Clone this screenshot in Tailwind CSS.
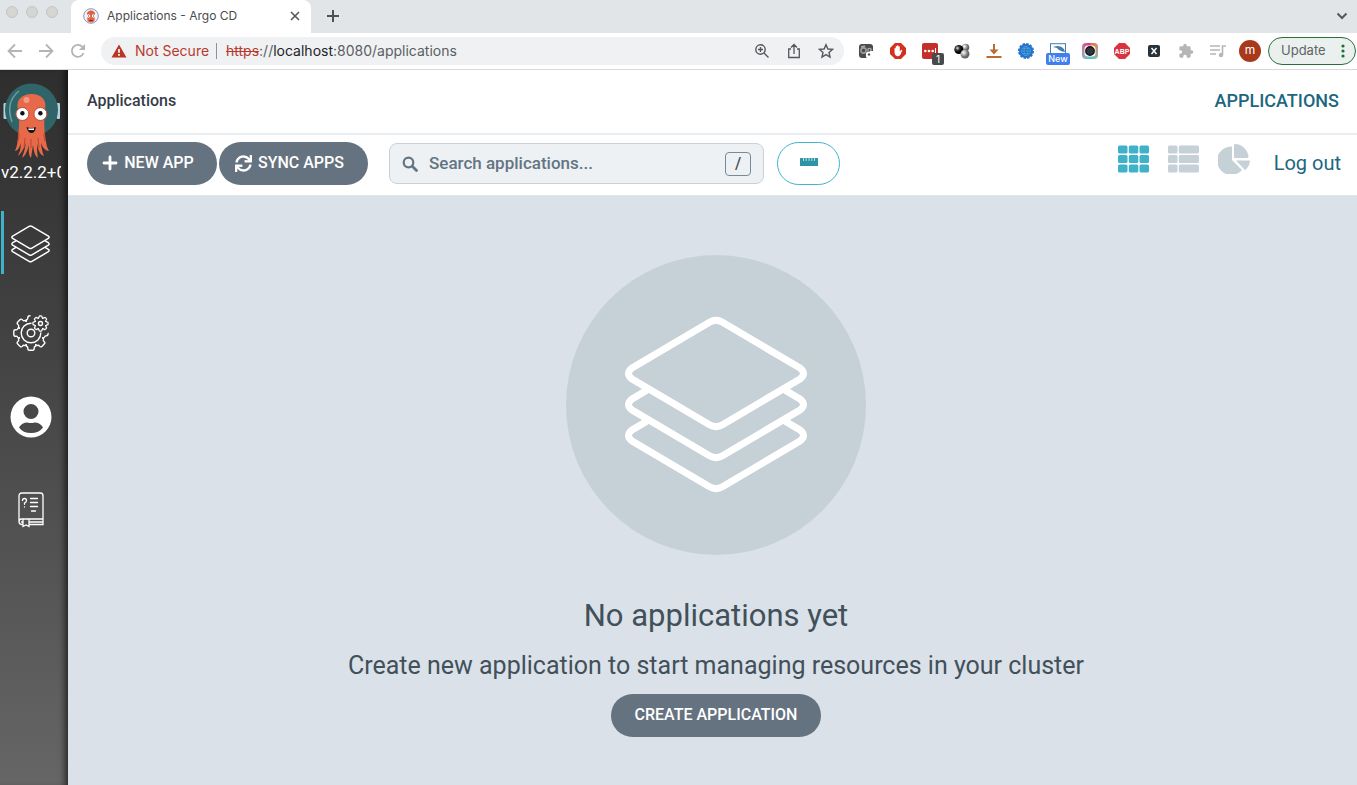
<!DOCTYPE html>
<html lang="en">
<head>
<meta charset="utf-8">
<meta name="viewport" content="width=device-width, initial-scale=1">
<title>Applications - Argo CD</title>
<script src="https://cdn.jsdelivr.net/npm/@tailwindcss/browser@4"></script>
</head>
<body class="flex min-h-screen flex-col bg-white font-[Roboto,sans-serif]">

<svg class="hidden" aria-hidden="true">
  <symbol id="layers" viewBox="54 56 192 188">
    <g fill="none" stroke="currentColor" stroke-width="7" stroke-linejoin="round" stroke-linecap="round">
      <path d="M156.5 67.3L234 113Q241 118.5 234 124L156.5 169.7Q150 173.5 143.5 169.7L66 124Q59 118.5 66 113L143.5 67.3Q150 63.5 156.5 67.3Z"/>
      <path d="M220.5 136L234 144Q241 149.5 234 155L156.5 200.7Q150 204.5 143.5 200.7L66 155Q59 149.5 66 144L79.5 136"/>
      <path d="M220.5 167L234 175Q241 180.5 234 186L156.5 231.7Q150 235.5 143.5 231.7L66 186Q59 180.5 66 175L79.5 167"/>
    </g>
  </symbol>
  <symbol id="argo" viewBox="0 0 60 80">
    <rect x="3.500" y="23" width="3.500" height="16" rx="1" fill="#b5cfe0"/>
    <rect x="56.500" y="23" width="3.500" height="16" rx="1" fill="#b5cfe0"/>
    <circle cx="31.500" cy="30" r="26.500" fill="#2f6569"/>
    <path d="M12 42Q5 22 19 11" fill="none" stroke="#6d9c9d" stroke-width="1.500"/>
    <path d="M18 29C13 9 50 9 45 29C44 38 44 45 45 55Q46 66 49 71Q44 71 41 63Q42 72 44 76Q39 75 37 64Q37 74 38 78Q34 76 33 65L31 78Q28 76 29 65Q26 76 22 78Q25 70 26 63Q22 73 18 76Q21 70 21 63Q19 70 15 71Q18 64 18 55C20 43 19 38 18 29Z" fill="#e6694a"/>
    <path d="M18 50Q20 56 18 61M45 50Q43 56 45 61M25 58L24 68M31 59L31 68M38 58L39 68" fill="none" stroke="#c2452f" stroke-width="1"/>
    <ellipse cx="26.500" cy="20" rx="3" ry="3" fill="#f39a84"/>
    <circle cx="22.400" cy="34" r="6.500" fill="#fff" stroke="#bf4935" stroke-width="1"/>
    <circle cx="40.400" cy="34" r="6.500" fill="#fff" stroke="#bf4935" stroke-width="1"/>
    <circle cx="22.400" cy="33.300" r="2.200" fill="#111"/>
    <circle cx="40.400" cy="33.300" r="2.200" fill="#111"/>
    <path d="M26.500 47Q31 49 36 47Q35 53 31.500 53Q28 53 26.500 47Z" fill="#151515"/>
    <path d="M28.500 48.200Q31 49 34 48.200V50H28.500Z" fill="#fff"/>
  </symbol>
</svg>

<header>
  <div class="flex h-[33px] bg-[#e1e5e8]">
    <div class="flex w-[71px] shrink-0 gap-2 pt-1.5 pl-1.5">
      <span class="size-3 rounded-full border border-[#c5c5c4] bg-[#d5d5d3]"></span>
      <span class="size-3 rounded-full border border-[#c5c5c4] bg-[#d5d5d3]"></span>
      <span class="size-3 rounded-full border border-[#c5c5c4] bg-[#d5d5d3]"></span>
    </div>
    <div class="flex w-60 shrink-0 items-center rounded-t-lg bg-white pr-2 pb-0.5 pl-3">
      <svg class="size-4" viewBox="0 0 16 16"><circle cx="8" cy="8" r="7.300" fill="#f3f2f8" stroke="#8e92c6"/><path d="M4 7C3 1 13 1 12 7L11.500 13Q8 16 4.500 13Z" fill="#e0633f"/><circle cx="5.500" cy="8" r="1.700" fill="#fff"/><circle cx="10.500" cy="8" r="1.700" fill="#fff"/><path d="M5.500 7.500v1M10.500 7.500v1M6.500 12.500h3" stroke="#532" stroke-width="1"/></svg>
      <span class="ml-2 flex-1 font-[Inter,sans-serif] text-xs text-[#494c50]">Applications - Argo CD</span>
      <button aria-label="Close tab" class="p-0.5"><svg class="size-3" viewBox="0 0 12 12"><path d="M2 2L10 10M10 2L2 10" stroke="#55585c" stroke-width="1.600"/></svg></button>
    </div>
    <button aria-label="New tab" class="ml-3.5 flex items-center pb-0.5"><svg class="size-4" viewBox="0 0 16 16"><path d="M8 2V14M2 8H14" stroke="#4d5054" stroke-width="2"/></svg></button>
    <button aria-label="Search tabs" class="mr-2 ml-auto flex items-center pb-0.5"><svg class="size-3.5" viewBox="0 0 14 14"><path d="M2.500 4.500L7 9L11.500 4.500" fill="none" stroke="#55585c" stroke-width="2"/></svg></button>
  </div>

  <div class="flex h-[37px] items-center border-b border-[#d6d8da] bg-white">
    <button aria-label="Back" class="flex w-[30px] justify-center"><svg class="size-4" viewBox="0 0 16 16"><path d="M15 8H2M8 1.500L1.500 8L8 14.500" fill="none" stroke="#b2b4b6" stroke-width="1.800"/></svg></button>
    <button aria-label="Forward" class="flex w-8 justify-center"><svg class="size-4" viewBox="0 0 16 16"><path d="M1 8H14M8 1.500L14.500 8L8 14.500" fill="none" stroke="#b2b4b6" stroke-width="1.800"/></svg></button>
    <button aria-label="Reload" class="flex w-8 justify-center"><svg class="size-4" viewBox="0 0 16 16"><path d="M13.500 10A6 6 0 1 1 12.300 3.800L14 5.500" fill="none" stroke="#b2b4b6" stroke-width="1.800"/><path d="M15 1V7H9Z" fill="#b2b4b6"/></svg></button>
    <div class="ml-[7px] flex h-7 min-w-0 flex-1 items-center rounded-full bg-[#eff1f3] pl-2.5 font-[Inter,sans-serif] text-sm">
      <svg class="h-4 w-4" viewBox="0 0 16 16"><path d="M8 1.500L15.500 14.500H.5Z" fill="#b93524"/><path d="M8 6V9.800M8 11V12.800" stroke="#fff" stroke-width="1.700"/></svg>
      <span class="ml-2 w-[73px] whitespace-nowrap text-[#b93a2c]">Not Secure</span>
      <span class="mr-[9px] ml-2 h-4 w-px bg-[#8f9296]"></span>
      <span class="flex-1 whitespace-nowrap text-[#5b5e62]"><s class="text-[#b93a2c]">https</s>://<span class="text-[#222427]">localhost</span>:8080/applications</span>
      <button aria-label="Zoom" class="flex w-8 justify-center"><svg class="size-4" viewBox="0 0 16 16"><g fill="none" stroke="#54575b" stroke-width="1.400"><circle cx="6.500" cy="6.500" r="4.700"/><path d="M10 10L14.500 14.500M4 6.500H9M6.500 4V9"/></g></svg></button>
      <button aria-label="Share" class="flex w-8 justify-center"><svg class="size-4" viewBox="0 0 16 16"><path d="M5 6H2.700V14.500H13.300V6H11M8 11V2M5 4.500L8 1.500L11 4.500" fill="none" stroke="#54575b" stroke-width="1.300"/></svg></button>
      <button aria-label="Bookmark" class="mr-0.5 flex w-8 justify-center"><svg class="size-4" viewBox="0 0 16 16"><path d="M8 1.800L9.900 6L14.500 6.400L11 9.500L12 14L8 11.600L4 14L5 9.500L1.500 6.400L6.100 6Z" fill="none" stroke="#54575b" stroke-width="1.400"/></svg></button>
    </div>
    <div class="ml-1.5 flex items-center">
      <button aria-label="Extension" class="flex w-8 justify-center"><svg class="size-4" viewBox="0 0 16 16"><rect x="1" y="1" width="14" height="14" rx="3" fill="#494b4d"/><circle cx="5.500" cy="7.500" r="2.600" fill="none" stroke="#9b9d9e" stroke-width="1.600"/><path d="M3 4L7 3M10 10V6A2 2 0 0 1 13 6V8" fill="none" stroke="#aaa" stroke-width="1.300"/><path d="M8 10.500Q8 9 9.500 9H11L12 8H16V15H9.500Q8 15 8 13.500Z" fill="#fff"/><circle cx="11" cy="11.500" r="1.200" fill="#555"/></svg></button>
      <button aria-label="Content blocker" class="flex w-8 justify-center"><svg class="size-4" viewBox="0 0 16 16"><path d="M5 0H11L16 5V11L11 16H5L0 11V5Z" fill="#d3301f"/><path d="M4.500 9V5.500Q5 4.500 5.700 5.500V3.500Q6.400 2.500 7 3.500V2.700Q7.700 1.800 8.400 2.700V3.500Q9.200 2.700 9.800 3.700V8.500L11 7Q12 6.500 12.300 7.300L10.500 11.500Q9.500 13.500 7.500 13.200Q4.500 13 4.500 9Z" fill="#fff"/></svg></button>
      <button aria-label="Password manager, 1" class="relative flex w-8 justify-center"><svg class="size-4" viewBox="0 0 16 16"><rect width="16" height="16" rx="2" fill="#c43029"/><circle cx="3.300" cy="8" r="1.300" fill="#fff"/><circle cx="7" cy="8" r="1.300" fill="#fff"/><circle cx="10.700" cy="8" r="1.300" fill="#fff"/><path d="M13.500 5V10" stroke="#fff"/></svg><span class="absolute top-2.5 left-[18px] h-3 w-3 rounded-xs bg-[#484a4c] text-center font-[Inter,sans-serif] text-[10px] leading-3 text-white">1</span></button>
      <button aria-label="Extension" class="flex w-8 justify-center"><svg class="size-4" viewBox="0 0 16 16"><defs><radialGradient id="b1" cx=".35" cy=".35"><stop stop-color="#ddd"/><stop offset=".5" stop-color="#333"/><stop offset="1"/></radialGradient><radialGradient id="b2" cx=".35" cy=".35"><stop stop-color="#fff"/><stop offset="1" stop-color="#666"/></radialGradient></defs><circle cx="11.500" cy="4.500" r="3.800" fill="url(#b2)"/><circle cx="4.800" cy="6.500" r="4.500" fill="url(#b1)"/><circle cx="11" cy="11" r="4.500" fill="url(#b2)"/></svg></button>
      <button aria-label="Downloads" class="flex w-8 justify-center"><svg class="size-4" viewBox="0 0 16 16"><path d="M7 1H9V6.500H12.500L8 11.500L3.500 6.500H7Z" fill="#b96c31"/><path d="M.5 14H15.500" stroke="#b96c31" stroke-width="2"/></svg></button>
      <button aria-label="Translate" class="flex w-8 justify-center"><svg class="size-4" viewBox="0 0 16 16"><circle cx="8" cy="8" r="7" fill="#2274ce"/><circle cx="8" cy="8" r="7" fill="none" stroke="#2274ce" stroke-width="2" stroke-dasharray="2.400 1.260"/><g fill="none" stroke="#64b0d0" stroke-width=".5"><circle cx="8" cy="8" r="4.500"/><ellipse cx="8" cy="8" rx="2" ry="4.500"/><path d="M3.500 8H12.500M4.500 5.500H11.500M4.500 10.500H11.500"/></g></svg></button>
      <button aria-label="New extension" class="relative flex w-8 justify-center"><svg class="size-4" viewBox="0 0 16 16"><rect x=".5" y=".7" width="15" height="12" fill="#fff" stroke="#477da9"/><path d="M3 4Q10 1 14 6L15 9Q9 8 7 5Z" fill="#477da9"/></svg><span class="absolute top-2.5 left-1 h-3 w-6 rounded-xs bg-[#4080ec] text-center font-[Inter,sans-serif] text-[9px] leading-3 font-medium text-white">New</span></button>
      <button aria-label="Screen capture" class="flex w-8 justify-center"><span class="flex size-4 items-center justify-center rounded-sm bg-conic from-[#f0653a] via-[#45c8c8] to-[#e0248c]"><svg class="size-3.5" viewBox="0 0 14 14"><rect x="1.500" y="1.500" width="11" height="11" rx="3.500" fill="#fff"/><circle cx="7" cy="7" r="4.200" fill="#30343b" stroke="#16181c" stroke-width="1.500"/></svg></span></button>
      <button aria-label="Adblock Plus" class="flex w-8 justify-center"><svg class="size-4" viewBox="0 0 16 16"><path d="M5 0H11L16 5V11L11 16H5L0 11V5Z" fill="#da3340"/><text x="8" y="10.500" text-anchor="middle" font-family="Liberation Sans, sans-serif" font-weight="bold" font-size="7" fill="#fff">ABP</text></svg></button>
      <button aria-label="XPath" class="flex w-8 justify-center"><svg class="size-4" viewBox="0 0 16 16"><rect x="2" y="2" width="12" height="12" rx="2" fill="#27323a"/><path d="M5.500 5L10.500 11M10.500 5L5.500 11" stroke="#fff" stroke-width="1.500"/></svg></button>
      <button aria-label="Extensions" class="flex w-8 justify-center"><svg class="size-4" viewBox="0 0 24 24"><path fill="#b4b6b8" d="M20.500 11H19V7a2 2 0 0 0-2-2h-4V3.500a2.500 2.500 0 0 0-5 0V5H4a2 2 0 0 0-2 2v3.800h1.500a2.700 2.700 0 0 1 0 5.400H2V20a2 2 0 0 0 2 2h3.800v-1.500a2.700 2.700 0 0 1 5.400 0V22H17a2 2 0 0 0 2-2v-4h1.500a2.500 2.500 0 0 0 0-5z"/></svg></button>
      <button aria-label="Media controls" class="flex w-8 justify-center"><svg class="size-4" viewBox="0 0 16 16"><path d="M0 3H10M0 7H10M0 11H6M12.500 12V3H16" fill="none" stroke="#b4b6b8" stroke-width="1.600"/><circle cx="11" cy="12" r="2.200" fill="#b4b6b8"/></svg></button>
      <button aria-label="Profile" class="flex w-8 justify-center"><span class="size-[22px] rounded-full bg-[#a83a1b] text-center font-[Inter,sans-serif] text-xs leading-5 text-white">m</span></button>
    </div>
    <button class="mr-px ml-0.5 flex h-7 w-[88px] items-center rounded-full border border-[#28703a] bg-[#eaf0ed] pl-3 font-[Inter,sans-serif] text-[13px] text-[#606468]">Update
      <svg class="mr-2.5 ml-auto h-3.5 w-1" viewBox="0 0 4 14"><g fill="#1e6f35"><circle cx="2" cy="2" r="1.600"/><circle cx="2" cy="7" r="1.600"/><circle cx="2" cy="12" r="1.600"/></g></svg>
    </button>
  </div>
</header>

<div class="flex flex-1">
  <nav class="flex w-[68px] shrink-0 flex-col bg-linear-to-b from-[#2e2e2e] to-[#666666] pt-2.5 text-white shadow-[inset_-7px_0_6px_-4px_rgba(0,0,0,0.6)]">
    <svg class="h-20 w-[60px]" role="img" aria-label="Argo"><use href="#argo"/></svg>
    <div class="w-[61px] overflow-hidden pl-px text-[17px] leading-6 whitespace-nowrap">v2.2.2+0</div>
    <a href="#" aria-label="Applications" class="mt-[27px] ml-px flex h-[63px] w-[60px] items-center border-l-[3px] border-[#3fb1c8] pt-0.5 pl-1.5"><svg class="h-10 w-[41px]"><use href="#layers"/></svg></a>
    <a href="#" aria-label="Settings" class="mt-6 flex h-[70px] w-[61px] items-center justify-center">
      <svg class="size-10" viewBox="-20 -20 40 40"><defs><path id="tooth" d="M11.650 -4.820Q12.900 -5.300 13.500 -4Q14 -3 15.300 -3.200Q17.200 -3.400 17.200 -1.500V1.500Q17.200 3.400 15.300 3.200Q14 3 13.500 4Q12.900 5.300 11.650 4.820"/></defs>
        <g fill="none" stroke="#fff" stroke-width="1.400" stroke-linecap="round">
          <use href="#tooth" transform="rotate(45)"/><use href="#tooth" transform="rotate(90)"/><use href="#tooth" transform="rotate(135)"/><use href="#tooth" transform="rotate(180)"/><use href="#tooth" transform="rotate(225)"/>
          <path d="M-4.820 -11.650Q-5.300 -12.900 -4 -13.500Q-3 -14 -3.200 -15.300Q-3.200 -17 -1 -17.200M11.650 4.820Q12.900 5.300 13.500 4Q14 2.800 15.300 2.800Q17.200 2.500 17.200 .5"/>
          <path d="M0 -9.800A9.800 9.800 0 1 0 9.800 0"/><circle r="3.800"/>
          <circle cx="9.500" cy="-9.500" r="2"/>
          <g transform="translate(9.500 -9.500) scale(.44)" stroke-width="2.800"><use href="#tooth"/><use href="#tooth" transform="rotate(45)"/><use href="#tooth" transform="rotate(90)"/><use href="#tooth" transform="rotate(135)"/><use href="#tooth" transform="rotate(180)"/><use href="#tooth" transform="rotate(225)"/><use href="#tooth" transform="rotate(270)"/><use href="#tooth" transform="rotate(315)"/></g>
        </g></svg>
    </a>
    <a href="#" aria-label="User info" class="mt-3.5 flex h-[70px] w-[61px] items-center justify-center">
      <svg class="size-[42px]" viewBox="0 0 42 42"><path fill="#fff" fill-rule="evenodd" d="M21 .5A20.500 20.500 0 1 1 21 41.500A20.500 20.500 0 1 1 21 .5ZM21 8A7.500 7.500 0 1 0 21 23A7.500 7.500 0 1 0 21 8ZM9 31.500Q13 37 21 37Q29 37 33 31.500Q30 26.500 24.500 26.500Q21 27.500 17.500 26.500Q12 26.500 9 31.500Z"/></svg>
    </a>
    <a href="#" aria-label="Documentation" class="mt-6 flex h-[68px] w-[62px] items-center justify-center">
      <svg class="h-9 w-7" viewBox="0 0 28 36"><g fill="none" stroke="#fff" stroke-width="1.300" stroke-linecap="round"><path d="M6 32.500H4.500A2.700 2.700 0 0 1 2 30V4Q2 1 5 1H23.500Q26 1 26 4V32.500H12M26 27H4.500Q2 27 2 30M12.500 30H26M4.500 30H6M6 27V34.500L9 33L12 34.500V27"/><path d="M13.500 6.500H20.500M13.500 10.500H20.500M13.500 14.500H20.500M14.500 19H18.500M5.500 8.500Q5.500 6.500 7.500 6.500Q9.500 6.500 9.500 8.500Q9.500 10 7.500 11V12.300M7.500 14.800V15"/></g></svg>
    </a>
  </nav>

  <div class="flex min-w-0 flex-1 flex-col">
    <div class="flex h-[65px] items-center justify-between border-b-2 border-[#e9eef2] pr-[18px] pb-0.5 pl-[19px]">
      <h1 class="text-base font-medium text-[#363c4a]">Applications</h1>
      <span class="text-lg font-medium text-[#1d6680]">APPLICATIONS</span>
    </div>
    <div class="flex h-[61px] items-center border-b border-[#e3e6e8] pr-4 pb-1 pl-[19px]">
      <button class="flex h-[43px] w-[130px] items-center justify-center gap-1.5 rounded-full bg-[#65727f] pr-2 text-base font-medium text-white"><svg class="size-4" viewBox="0 0 16 16"><path d="M8 2V14M2 8H14" stroke="#fff" stroke-width="2.800" stroke-linecap="round"/></svg>NEW APP</button>
      <button class="ml-0.5 flex h-[43px] w-[149px] items-center justify-center gap-1.5 rounded-full bg-[#65727f] pr-2 text-base font-medium text-white"><svg class="size-[17px]" viewBox="0 0 512 512"><path fill="#fff" d="M440.650 12.570l4 82.770A247.160 247.160 0 0 0 255.830 8C134.730 8 33.910 94.920 12.290 209.820A12 12 0 0 0 24.090 224h49.050a12 12 0 0 0 11.670-9.260 175.910 175.910 0 0 1 317-56.940l-101.460-4.860a12 12 0 0 0-12.570 12v47.410a12 12 0 0 0 12 12H500a12 12 0 0 0 12-12V12a12 12 0 0 0-12-12h-47.370a12 12 0 0 0-11.980 12.570zM255.830 432a175.610 175.610 0 0 1-146-77.800l101.800 4.870a12 12 0 0 0 12.570-12v-47.400a12 12 0 0 0-12-12H12a12 12 0 0 0-12 12V500a12 12 0 0 0 12 12h47.350a12 12 0 0 0 12-12.600l-4.150-82.570A247.170 247.170 0 0 0 255.830 504c121.110 0 221.930-86.920 243.550-201.820a12 12 0 0 0-11.800-14.180h-49.050a12 12 0 0 0-11.670 9.260A175.860 175.860 0 0 1 255.830 432z"/></svg>SYNC APPS</button>
      <label class="ml-[21px] flex h-[41px] w-[375px] items-center rounded-lg border border-[#c9d1d7] bg-[#edf1f4] px-3 pt-px">
        <svg class="size-4" viewBox="0 0 16 16"><circle cx="6.500" cy="6.500" r="4.800" fill="none" stroke="#637482" stroke-width="2.200"/><path d="M10.500 10.500L14.500 14.500" stroke="#637482" stroke-width="2.800" stroke-linecap="round"/></svg>
        <input type="text" aria-label="Search applications" placeholder="Search applications..." class="ml-[11px] min-w-0 flex-1 bg-transparent text-[17px] font-medium outline-none placeholder:text-[#637482]">
        <kbd class="flex h-6 w-[26px] items-center justify-center rounded-sm border border-[#768b9a] font-[Roboto,sans-serif] text-base font-medium text-[#45515c]">/</kbd>
      </label>
      <button aria-label="Toggle compact view" class="ml-[13px] flex h-[43px] w-[63px] items-center justify-center rounded-full border border-[#40b4cb] pb-[3px]"><svg class="h-2 w-[18px]" viewBox="0 0 18 8"><rect width="18" height="8" rx=".5" fill="#2f93a7"/><path d="M3.500 0V3M6.200 0V3M9 0V3M11.800 0V3M14.500 0V3" stroke="#b5dde5" stroke-width="1"/></svg></button>
      <div class="ml-auto flex items-center gap-[19px] pb-2">
        <button aria-label="Tiles view"><svg class="block h-7 w-[31px]" viewBox="0 0 31 28" fill="#3fb1c8"><rect y=".5" width="9.500" height="8" rx="1.500"/><rect x="10.800" y=".5" width="9.500" height="8" rx="1.500"/><rect x="21.500" y=".5" width="9.500" height="8" rx="1.500"/><rect y="10" width="9.500" height="8" rx="1.500"/><rect x="10.800" y="10" width="9.500" height="8" rx="1.500"/><rect x="21.500" y="10" width="9.500" height="8" rx="1.500"/><rect y="19.500" width="9.500" height="8" rx="1.500"/><rect x="10.800" y="19.500" width="9.500" height="8" rx="1.500"/><rect x="21.500" y="19.500" width="9.500" height="8" rx="1.500"/></svg></button>
        <button aria-label="List view"><svg class="block h-7 w-[31px]" viewBox="0 0 31 28" fill="#c6d0d7"><rect y=".5" width="9.500" height="8" rx="1.500"/><rect x="10.800" y=".5" width="20.200" height="8" rx="1.500"/><rect y="10" width="9.500" height="8" rx="1.500"/><rect x="10.800" y="10" width="20.200" height="8" rx="1.500"/><rect y="19.500" width="9.500" height="8" rx="1.500"/><rect x="10.800" y="19.500" width="20.200" height="8" rx="1.500"/></svg></button>
        <button aria-label="Summary view"><svg class="block h-[30px] w-8" viewBox="0 0 32 30" fill="#c6d0d7"><path d="M13 2.500Q14 2 14 3V16L23.500 25.500Q24 26.500 23 27A14.200 14.200 0 1 1 13 2.500Z"/><path d="M16 1Q16 0 17 0A14 14 0 0 1 30.500 13Q30.500 14 29.500 14H16Z"/><path d="M18 16.500H31Q32 16.500 32 17.500A14 14 0 0 1 28 25.500Q27 26 26.500 25.500Z"/></svg></button>
      </div>
      <a href="#" class="ml-6 text-xl text-[#1d6680]">Log out</a>
    </div>
    <main class="flex flex-1 flex-col items-center bg-[#dae1e8] pt-[59px] pl-[7px] text-[#42505a]">
      <div class="flex size-[300px] items-center justify-center rounded-full bg-[#c6d1d7] text-white"><svg class="h-[188px] w-48"><use href="#layers"/></svg></div>
      <h2 class="mt-[41px] text-[31px] leading-10">No applications yet</h2>
      <p class="mt-3.5 text-[25px] leading-8">Create new application to start managing resources in your cluster</p>
      <button class="mt-3 h-[43px] w-[210px] rounded-full bg-[#65727f] pb-0.5 text-base font-medium text-white">CREATE APPLICATION</button>
    </main>
  </div>
</div>
</body>
</html>
